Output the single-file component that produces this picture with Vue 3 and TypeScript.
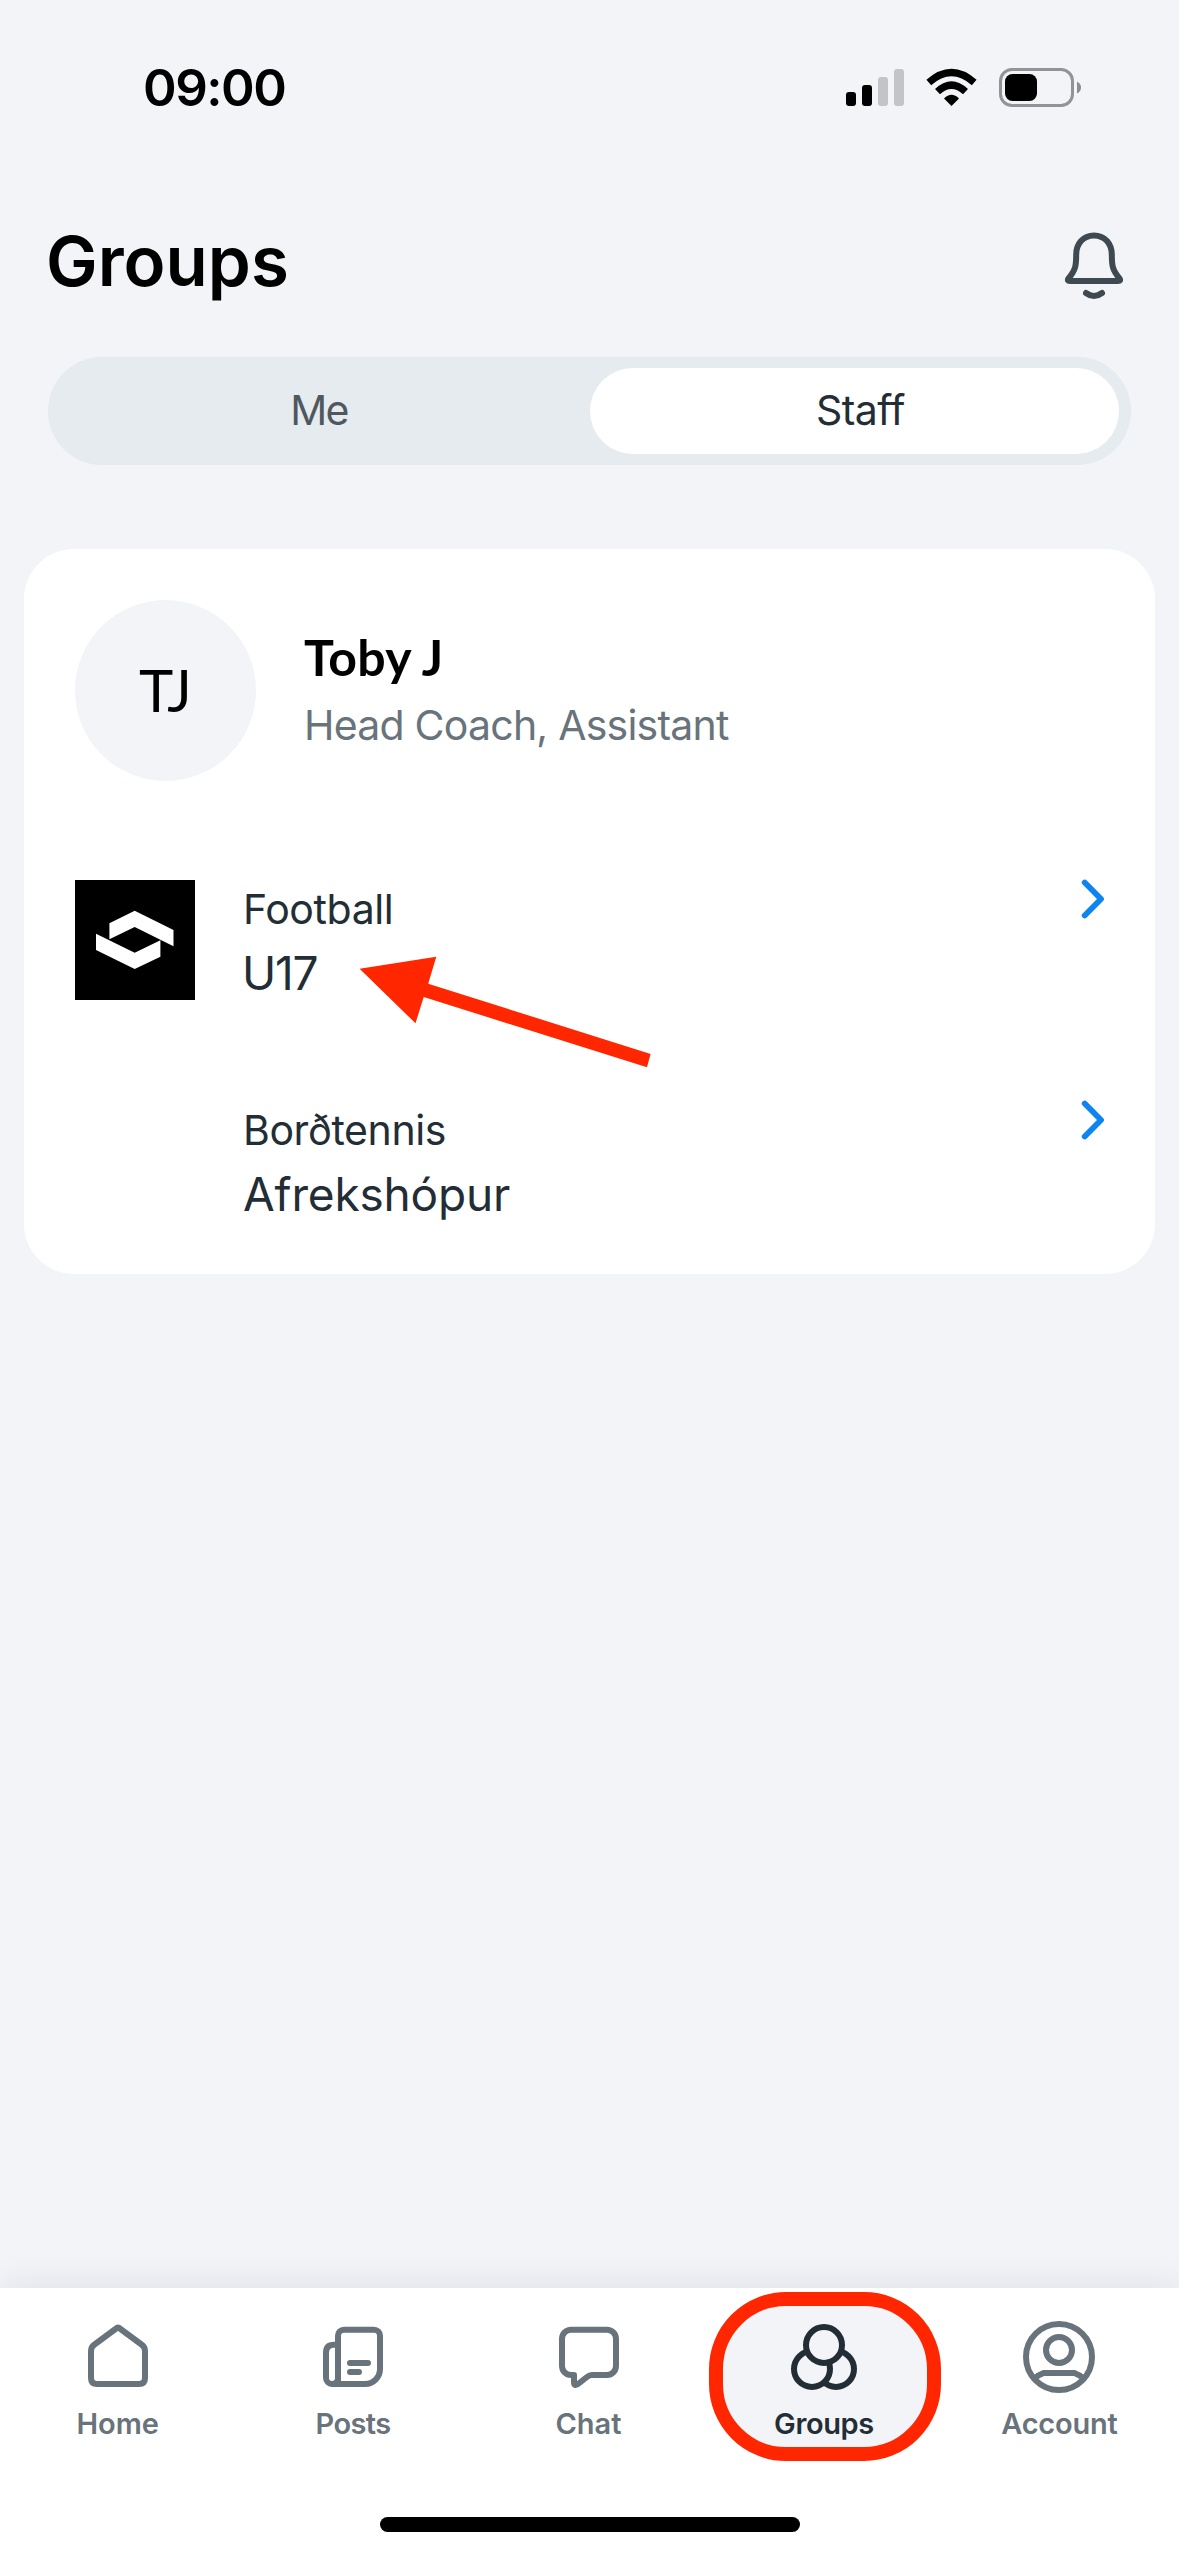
<script setup lang="ts">
interface GroupRow {
  sport: string
  team: string
  logo: boolean
}

interface Tab {
  id: 'home' | 'posts' | 'chat' | 'groups' | 'account'
  label: string
}

const groups: GroupRow[] = [
  { sport: 'Football', team: 'U17', logo: true },
  { sport: 'Borðtennis', team: 'Afrekshópur', logo: false },
]

const tabs: Tab[] = [
  { id: 'home', label: 'Home' },
  { id: 'posts', label: 'Posts' },
  { id: 'chat', label: 'Chat' },
  { id: 'groups', label: 'Groups' },
  { id: 'account', label: 'Account' },
]

const activeTab: Tab['id'] = 'groups'
</script>

<template>
  <div class="screen">
    <header class="status">
      <span class="time">09:00</span>
      <svg class="status-icons" width="236" height="40" viewBox="0 0 236 40">
        <rect x="0" y="24" width="10" height="14" rx="3" />
        <rect x="16" y="17" width="10" height="21" rx="3" />
        <rect x="32" y="9" width="10" height="29" rx="3" fill="#c3c4c7" />
        <rect x="48" y="1" width="10" height="37" rx="3" fill="#c3c4c7" />
        <path d="M105.500 38L98 30.500Q105.500 23 113 30.500Z" />
        <g fill="none" stroke="#000" stroke-width="7.200">
          <path d="M91.500 23.700Q105.500 10.500 119.500 23.700" />
          <path d="M82.800 14.500Q105.500 -5.500 128.200 14.500" />
        </g>
        <rect x="154.500" y="1.500" width="72" height="36" rx="11.500" fill="none" stroke="#929396" stroke-width="3" />
        <rect x="159" y="6" width="32" height="27" rx="7.500" />
        <path d="M231 13.500Q235 15.500 235 19.500T231 25.500Z" fill="#8c8d90" />
      </svg>
    </header>

    <div class="heading">
      <h1>Groups</h1>
      <svg class="bell" width="72" height="72" viewBox="0 0 72 72">
        <path d="M36 7.500C25 7.500 18.200 16 18.200 26.500C18.200 38 17.500 42 10.500 50.500Q8.800 53 12 53H60Q63.200 53 61.500 50.500C54.500 42 53.800 38 53.800 26.500C53.800 16 47 7.500 36 7.500Z" />
        <path d="M28 65Q36 71 44 65" />
      </svg>
    </div>

    <div class="segments">
      <div class="segment">Me</div>
      <div class="segment selected">Staff</div>
    </div>

    <main class="card">
      <div class="person">
        <div class="avatar">TJ</div>
        <div class="who">
          <span class="name">Toby J</span>
          <span class="role">Head Coach, Assistant</span>
        </div>
      </div>
      <div v-for="group in groups" :key="group.sport" class="group">
        <div class="logo">
          <svg v-if="group.logo" width="120" height="120" viewBox="0 0 120 120">
            <rect width="120" height="120" />
            <path
              fill="#fff"
              d="M59.700 30.700L98.500 50V66.300L59.700 47L34.400 59.300V43.300ZM21 53.700L59.700 72.700L85.400 60.300V76.700L59.700 89L21 70Z"
            />
          </svg>
        </div>
        <div class="labels">
          <span class="sport">{{ group.sport }}</span>
          <span class="team" :class="{ tight: group.logo }">{{ group.team }}</span>
        </div>
        <svg class="chevron" width="24" height="40" viewBox="0 0 24 40">
          <path d="M4.700 3.500L21 20L4.700 36.500" />
        </svg>
      </div>

      <svg class="pointer" width="300" height="125" viewBox="0 0 300 125">
        <path d="M4.600 18.700L81.300 6.700L73.200 33.700L295.600 104L292 117.300L68.700 47L60.500 73.300Z" />
      </svg>
    </main>

    <nav class="tabbar">
      <div class="tabs">
        <div v-for="tab in tabs" :key="tab.id" class="tab" :class="[tab.id, { active: tab.id === activeTab }]">
          <span v-if="tab.id === activeTab" class="ring"></span>
          <svg class="icon" width="72" height="72" viewBox="0 0 72 72">
            <path
              v-if="tab.id === 'home'"
              d="M33.500 8Q36 5.500 38.500 8L59.500 23.500Q63 26 63 30V57Q63 63 57 63H15Q9 63 9 57V30Q9 26 12.500 23.500Z"
            />
            <template v-else-if="tab.id === 'posts'">
              <path d="M27 8.700H57A6 6 0 0 1 63 14.700V48A15 15 0 0 1 48 63H21V14.700A6 6 0 0 1 27 8.700Z" />
              <path d="M21 23.700H17Q9 23.700 9 31.700V57A6 6 0 0 0 15 63H22M15 63A6 6 0 0 0 21 57" />
              <path d="M33 42H51M33 51H42" />
            </template>
            <path
              v-else-if="tab.id === 'chat'"
              d="M18 8.700H54A9 9 0 0 1 63 17.700V45A9 9 0 0 1 54 54H39Q36.500 54 34 56L25 63Q21 65.500 21 61.500V54H18A9 9 0 0 1 9 45V17.700A9 9 0 0 1 18 8.700Z"
            />
            <g v-else-if="tab.id === 'groups'" class="discs">
              <circle cx="48" cy="48" r="18" />
              <circle cx="24" cy="48" r="18" />
              <circle cx="36" cy="24" r="18" />
            </g>
            <template v-else>
              <circle cx="36" cy="36" r="33" />
              <circle cx="36" cy="29" r="13" />
              <path d="M11 57.500Q15.500 54 20.500 52H51.500Q56.500 54 61 57.500" />
            </template>
          </svg>
          <span class="label">{{ tab.label }}</span>
        </div>
      </div>
      <div class="home-indicator"></div>
    </nav>
  </div>
</template>

<style>
body {
  margin: 0;
  background: #f2f4f8;
}
</style>

<style scoped>
.screen {
  display: flex;
  flex-direction: column;
  width: 1179px;
  height: 2556px;
  overflow: hidden;
  background: #f2f4f8;
  color: #232d35;
  font-family: Inter, sans-serif;
}

.screen svg {
  display: block;
  flex: none;
}

.status {
  display: flex;
  justify-content: space-between;
  box-sizing: border-box;
  height: 219px;
  padding: 58px 97px 0 143px;
}

.time {
  color: #000;
  font-size: 51px;
  font-weight: 600;
  line-height: 60px;
  letter-spacing: -1.5px;
}

.status-icons {
  margin-top: 10px;
}

.heading {
  display: flex;
  justify-content: space-between;
  height: 138px;
  padding: 0 49px 0 46px;
}

h1 {
  margin: 0;
  color: #000;
  font-size: 69px;
  font-weight: 600;
  line-height: 84px;
  letter-spacing: 0;
}

.bell {
  margin-top: 9px;
  fill: none;
  stroke: #3f4952;
  stroke-width: 6;
  stroke-linecap: round;
  stroke-linejoin: round;
}

.segments {
  display: flex;
  flex: none;
  box-sizing: border-box;
  height: 108px;
  margin: 0 48px;
  padding: 11px 12px 11px 0;
  border-radius: 54px;
  background: #e5ebef;
  color: #50585f;
  font-size: 41px;
}

.segment {
  display: flex;
  align-items: center;
  justify-content: center;
  box-sizing: border-box;
  width: 542px;
  padding-bottom: 2px;
  letter-spacing: -1.8px;
}

.segment.selected {
  width: 529px;
  padding-left: 12px;
  border-radius: 43px;
  background: #fff;
  color: #232d35;
  letter-spacing: -0.55px;
}

.card {
  position: relative;
  flex: none;
  box-sizing: border-box;
  height: 725px;
  margin: 84px 24px 0;
  padding: 51px;
  border-radius: 50px;
  background: #fff;
}

.person {
  display: flex;
  gap: 48px;
  margin-bottom: 99px;
}

.avatar {
  display: flex;
  align-items: center;
  justify-content: center;
  box-sizing: border-box;
  width: 181px;
  height: 181px;
  padding: 0 2px 2px 0;
  border-radius: 50%;
  background: #f2f4f8;
  color: #000;
  font-family: Lato, sans-serif;
  font-size: 58px;
  letter-spacing: -2px;
}

.who {
  display: flex;
  flex-direction: column;
  padding-top: 27px;
}

.name {
  margin-bottom: 13px;
  color: #000;
  font-family: Lato, sans-serif;
  font-size: 50px;
  font-weight: 700;
  line-height: 60px;
  letter-spacing: 0.3px;
}

.role {
  color: #68737b;
  font-size: 41px;
  line-height: 50px;
  letter-spacing: -0.77px;
}

.group {
  display: flex;
  height: 120px;
  margin-bottom: 101px;
}

.logo {
  width: 120px;
  margin-right: 48px;
}

.labels {
  display: flex;
  flex: 1;
  flex-direction: column;
  padding-top: 4px;
}

.sport {
  margin-bottom: 11px;
  font-size: 41px;
  line-height: 50px;
  letter-spacing: -0.4px;
}

.team {
  font-size: 46px;
  line-height: 56px;
  letter-spacing: -0.18px;
}

.team.tight {
  margin-left: -1px;
  letter-spacing: -1.2px;
}

.chevron {
  margin-top: -1px;
  fill: none;
  stroke: #0d84f0;
  stroke-width: 5.8;
  stroke-linecap: round;
  stroke-linejoin: round;
}

.pointer {
  position: absolute;
  top: 401px;
  left: 331px;
  fill: #ff2600;
}

.tabbar {
  flex: none;
  box-sizing: border-box;
  height: 268px;
  margin-top: auto;
  padding-top: 33px;
  background: #fff;
  box-shadow: 0 0 36px rgba(25, 28, 45, 0.1);
}

.tabs {
  display: flex;
  width: 1177px;
  height: 196px;
}

.tab {
  position: relative;
  display: flex;
  flex: 1;
  flex-direction: column;
  align-items: center;
  color: #68737b;
}

.tab.active {
  color: #232d35;
}

.icon {
  position: relative;
  fill: none;
  stroke: currentColor;
  stroke-width: 6;
  stroke-linecap: round;
  stroke-linejoin: round;
}

.discs {
  fill: #f2f4f8;
}

.label {
  position: relative;
  margin-top: 13px;
  font-size: 29px;
  font-weight: 600;
  line-height: 36px;
}

.posts .label {
  letter-spacing: -0.6px;
}

.groups .label {
  letter-spacing: -0.4px;
}

.account .label {
  letter-spacing: -0.25px;
}

.ring {
  position: absolute;
  top: -29px;
  left: 3px;
  box-sizing: border-box;
  width: 232px;
  height: 169px;
  border: 14px solid #ff2600;
  border-radius: 77px;
  background: #f2f4f8;
}

.home-indicator {
  width: 420px;
  height: 15px;
  margin: 0 auto;
  border-radius: 8px;
  background: #000;
}
</style>
